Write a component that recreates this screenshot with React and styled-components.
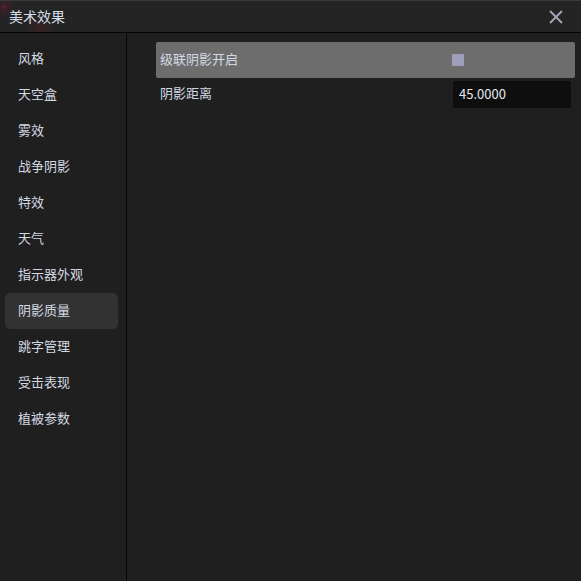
import styled, { createGlobalStyle } from "styled-components";

const GlobalStyle = createGlobalStyle`
  html, body {
    margin: 0;
    padding: 0;
    background: #1f1f1f;
  }
  body {
    font-family: "Noto Sans CJK SC", "Noto Sans", sans-serif;
    font-size: 13px;
    color: #d3d9e2;
  }
`;

const MENU = [
  "风格",
  "天空盒",
  "雾效",
  "战争阴影",
  "特效",
  "天气",
  "指示器外观",
  "阴影质量",
  "跳字管理",
  "受击表现",
  "植被参数",
];

const Window = styled.div`
  width: 581px;
  height: 581px;
  display: flex;
  flex-direction: column;
  background: #1f1f1f;
  overflow: hidden;
`;

const TitleBar = styled.div`
  height: 33px;
  flex-shrink: 0;
  box-sizing: border-box;
  display: flex;
  align-items: center;
  justify-content: space-between;
  padding: 0 17px 2px 9px;
  background: radial-gradient(circle at 4px 6px, #5a2430 0, #3a2028 3px, transparent 10px),
    radial-gradient(circle at 40px 28px, rgba(90, 30, 40, 0.35) 0, transparent 14px),
    #252425;
  border-top: 1px solid #3a3a3a;
  border-bottom: 1px solid #050505;
`;

const Title = styled.span`
  font-size: 14px;
  color: #d6dde8;
`;

const Close = styled.button`
  width: 16px;
  height: 16px;
  padding: 0;
  margin-top: 2px;
  border: none;
  background: none;
  display: flex;
  align-items: center;
  justify-content: center;
  cursor: pointer;
`;

const Body = styled.div`
  flex: 1;
  display: flex;
  min-height: 0;
`;

const Sidebar = styled.nav`
  width: 127px;
  flex-shrink: 0;
  box-sizing: border-box;
  padding: 8px 8px 0 5px;
  border-right: 1px solid #050505;
  display: flex;
  flex-direction: column;
`;

const MenuItem = styled.div`
  height: 36px;
  box-sizing: border-box;
  display: flex;
  align-items: center;
  padding: 0 0 4px 13px;
  border-radius: 5px;
  background: ${({ $active }) => ($active ? "#323232" : "transparent")};
`;

const Content = styled.div`
  flex: 1;
  padding: 9px 6px 0 29px;
  display: flex;
  flex-direction: column;
`;

const Row = styled.div`
  height: ${({ $highlight }) => ($highlight ? "36px" : "33px")};
  box-sizing: border-box;
  display: grid;
  grid-template-columns: 292px 1fr;
  align-items: center;
  padding-left: 4px;
  border-radius: 2px;
  background: ${({ $highlight }) => ($highlight ? "#6d6d6d" : "transparent")};
`;

const Label = styled.span`
  padding-bottom: 4px;
`;

const Checkbox = styled.span`
  width: 12px;
  height: 12px;
  margin-bottom: 1px;
  border-radius: 1px;
  background: #9da0b8;
`;

const NumberBox = styled.div`
  width: 118px;
  height: 27px;
  margin-left: 1px;
  box-sizing: border-box;
  padding: 0 0 3px 6px;
  display: flex;
  align-items: center;
  background: #0e0e0e;
  border-radius: 2px;
  color: #e4e8ee;
`;

const App = () => {
  const active = "阴影质量";

  return (
    <>
      <GlobalStyle />
      <Window>
        <TitleBar>
          <Title>美术效果</Title>
          <Close aria-label="close">
            <svg width="14" height="14" viewBox="0 0 14 14">
              <path d="M1 1L13 13M13 1L1 13" stroke="#a3a8b8" strokeWidth="1.8" />
            </svg>
          </Close>
        </TitleBar>
        <Body>
          <Sidebar>
            {MENU.map((name) => (
              <MenuItem key={name} $active={name === active}>
                {name}
              </MenuItem>
            ))}
          </Sidebar>
          <Content>
            <Row $highlight>
              <Label>级联阴影开启</Label>
              <Checkbox />
            </Row>
            <Row>
              <Label>阴影距离</Label>
              <NumberBox>45.0000</NumberBox>
            </Row>
          </Content>
        </Body>
      </Window>
    </>
  );
};

export default App;
